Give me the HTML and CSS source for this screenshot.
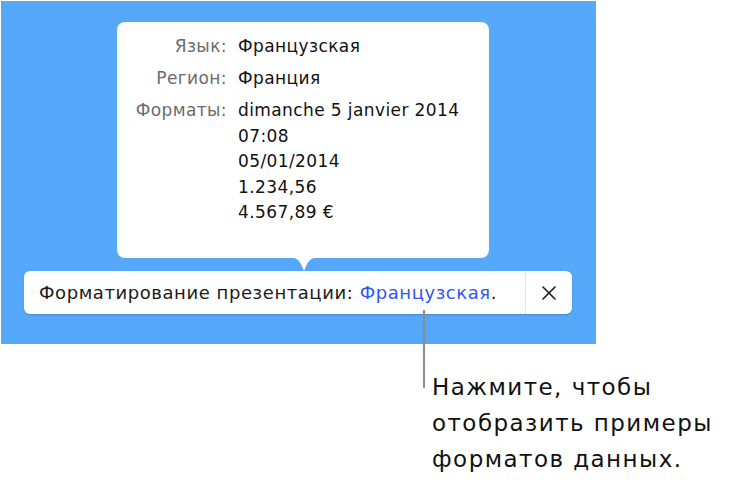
FILE: index.html
```html
<!DOCTYPE html>
<html lang="ru">
<head>
<meta charset="utf-8">
<link rel="stylesheet" href="styles.css">
</head>
<body>
<div class="page">
  <div class="stage">
    <div class="popover">
      <div class="row">
        <div class="label">Язык:</div>
        <div class="value">Французская</div>
      </div>
      <div class="row">
        <div class="label">Регион:</div>
        <div class="value">Франция</div>
      </div>
      <div class="row">
        <div class="label">Форматы:</div>
        <div class="value formats">
          <div>dimanche 5 janvier 2014</div>
          <div>07:08</div>
          <div>05/01/2014</div>
          <div>1.234,56</div>
          <div>4.567,89 €</div>
        </div>
      </div>
    </div>
    <div class="bar">
      <div class="bar-text">Форматирование презентации: <span class="link">Французская</span>.</div>
      <div class="bar-close">
        <svg width="14" height="14" viewBox="0 0 14 14"><path d="M1 1 L13 13 M13 1 L1 13" stroke="#1a1a1a" stroke-width="1.6" fill="none" stroke-linecap="round"/></svg>
      </div>
    </div>
  </div>
  <div class="callout">
    <div class="callout-line"></div>
    <div class="callout-text">Нажмите, чтобы<br>отобразить примеры<br>форматов данных.</div>
  </div>
</div>
</body>
</html>
```
FILE: styles.css
```css
html, body {
  margin: 0;
  padding: 0;
  background: #ffffff;
}
body {
  font-family: "DejaVu Sans", "Inter", sans-serif;
  color: #1a1a1a;
  width: 740px;
  height: 483px;
  overflow: hidden;
}
.page {
  position: relative;
  width: 740px;
  height: 483px;
  padding: 1px 0 0 1px;
  box-sizing: border-box;
}
.stage {
  width: 595px;
  height: 343px;
  background: #55a8fa;
  padding: 21px 0 0 23px;
  box-sizing: border-box;
}
.popover {
  position: relative;
  margin-left: 93px;
  width: 372px;
  height: 236px;
  background: #ffffff;
  border-radius: 8px;
  box-sizing: border-box;
  padding: 12px 0 0 0;
}
.popover::after {
  content: "";
  position: absolute;
  left: 170px;
  bottom: -14px;
  width: 34px;
  height: 15px;
  background: #ffffff;
  clip-path: path("M0 0 C8 0 11 2 14 7 L17 14 L20 7 C23 2 26 0 34 0 Z");
}
.row {
  display: flex;
  font-size: 17px;
  letter-spacing: 0.4px;
  line-height: 25px;
  margin-bottom: 7px;
}
.label {
  width: 121px;
  text-align: right;
  color: #6b6b6b;
  padding-right: 11px;
  box-sizing: border-box;
}
.value {
  color: #111111;
}
.formats div {
  line-height: 25.5px;
}
.bar {
  margin-top: 13px;
  width: 548px;
  height: 43px;
  background: #ffffff;
  border-radius: 6px;
  box-shadow: 0 1px 2px rgba(0, 0, 0, 0.18);
  display: flex;
  align-items: center;
}
.bar-text {
  flex: 1;
  font-size: 18px;
  letter-spacing: 0.57px;
  padding-left: 15px;
  color: #1a1a1a;
  white-space: nowrap;
}
.link {
  color: #2f55f5;
}
.bar-close {
  width: 46px;
  height: 100%;
  border-left: 1px solid #e2e2e2;
  display: flex;
  align-items: center;
  justify-content: center;
}
.bar-close svg {
  display: block;
}
.callout {
  position: absolute;
  left: 423px;
  top: 310px;
  display: flex;
  align-items: flex-start;
}
.callout-line {
  width: 2px;
  height: 78px;
  background: #8c8c8c;
}
.callout-text {
  margin-left: 7px;
  margin-top: 59px;
  font-size: 23px;
  letter-spacing: 1.45px;
  line-height: 36px;
  color: #111111;
  white-space: nowrap;
}
```
